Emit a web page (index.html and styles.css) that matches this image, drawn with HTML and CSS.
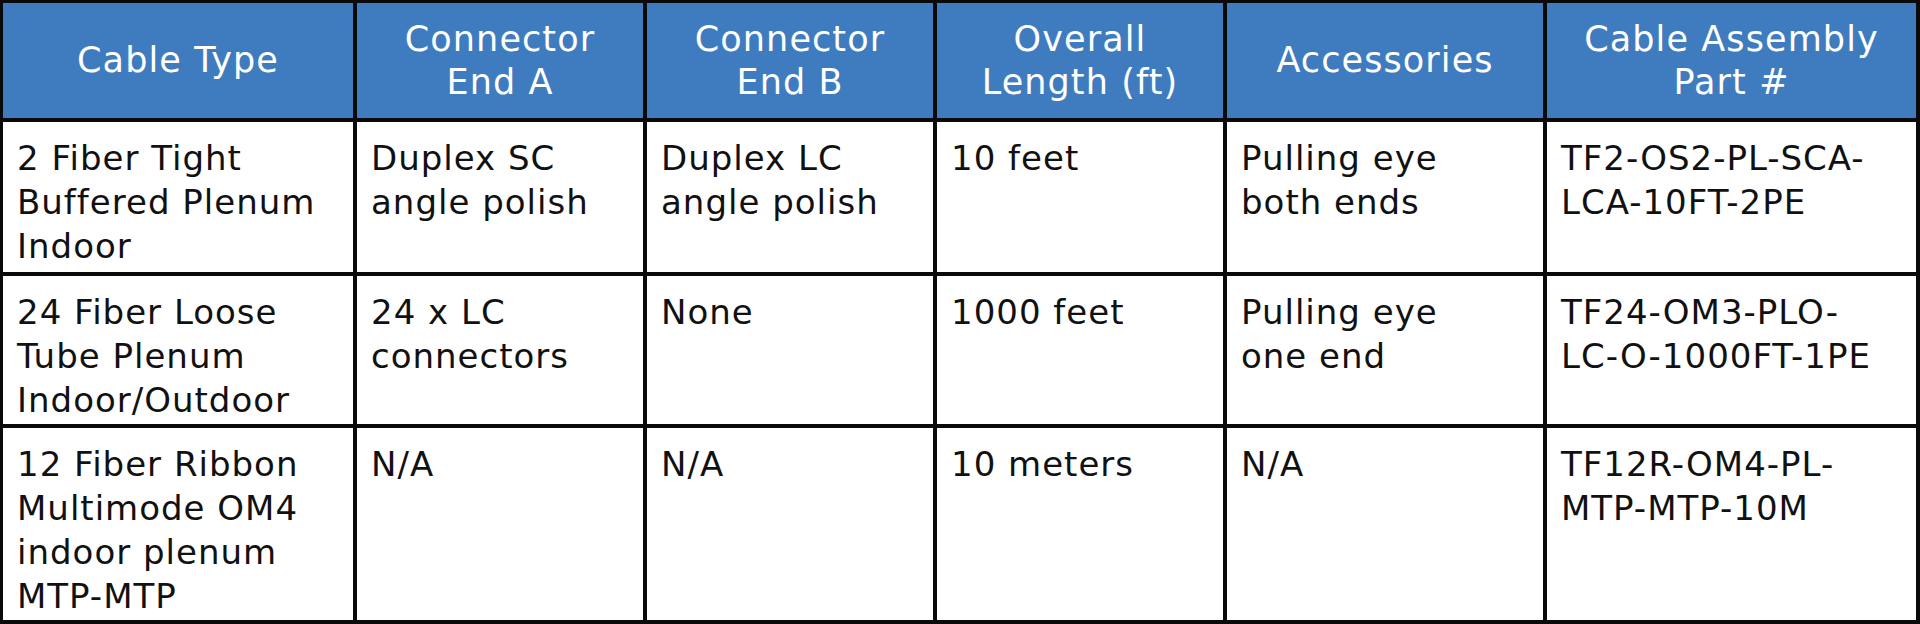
FILE: index.html
```
<!DOCTYPE html>
<html lang="en">
<head>
<meta charset="utf-8">
<title>Cable Assemblies</title>
<link rel="stylesheet" href="styles.css">
</head>
<body>
<table class="spec">
  <colgroup>
    <col class="c1"><col class="c2"><col class="c3"><col class="c4"><col class="c5"><col class="c6">
  </colgroup>
  <thead>
    <tr class="head">
      <th>Cable Type</th>
      <th>Connector<br>End A</th>
      <th>Connector<br>End B</th>
      <th>Overall<br>Length (ft)</th>
      <th>Accessories</th>
      <th>Cable Assembly<br>Part #</th>
    </tr>
  </thead>
  <tbody>
    <tr class="r1">
      <td>2 Fiber Tight<br>Buffered Plenum<br>Indoor</td>
      <td>Duplex SC<br>angle polish</td>
      <td>Duplex LC<br>angle polish</td>
      <td>10 feet</td>
      <td>Pulling eye<br>both ends</td>
      <td>TF2-OS2-PL-SCA-<br>LCA-10FT-2PE</td>
    </tr>
    <tr class="r2">
      <td>24 Fiber Loose<br>Tube Plenum<br>Indoor/Outdoor</td>
      <td>24 x LC<br>connectors</td>
      <td>None</td>
      <td>1000 feet</td>
      <td>Pulling eye<br>one end</td>
      <td>TF24-OM3-PLO-<br>LC-O-1000FT-1PE</td>
    </tr>
    <tr class="r3">
      <td>12 Fiber Ribbon<br>Multimode OM4<br>indoor plenum<br>MTP-MTP</td>
      <td>N/A</td>
      <td>N/A</td>
      <td>10 meters</td>
      <td>N/A</td>
      <td>TF12R-OM4-PL-<br>MTP-MTP-10M</td>
    </tr>
  </tbody>
</table>
</body>
</html>
```
FILE: styles.css
```
html, body {
  margin: 0;
  padding: 0;
  background: #ffffff;
}

.spec {
  width: 1920px;
  table-layout: fixed;
  border-collapse: separate;
  border-spacing: 0;
  border-top: 3px solid #0a0a0a;
  border-left: 3px solid #0a0a0a;
  font-family: "DejaVu Sans", "Liberation Sans", sans-serif;
  font-size: 34px;
  letter-spacing: 1px;
  line-height: 44px;
}

.c1 { width: 354px; }
.c2 { width: 290px; }
.c3 { width: 290px; }
.c4 { width: 290px; }
.c5 { width: 320px; }
.c6 { width: 373px; }

.spec th,
.spec td {
  box-sizing: border-box;
  border-right: 4px solid #0a0a0a;
  border-bottom: 4px solid #0a0a0a;
  white-space: nowrap;
  overflow: hidden;
}

.spec th {
  background: #3f7cbf;
  color: #ffffff;
  font-weight: normal;
  font-size: 35px;
  letter-spacing: 1.1px;
  line-height: 43px;
  text-align: center;
  vertical-align: middle;
  padding: 0 4px;
  height: 119px;
}

.spec td {
  color: #111111;
  text-align: left;
  vertical-align: top;
  padding: 14px 6px 0 14px;
}

.r1 td { height: 154px; }
.r2 td { height: 152px; }
.r3 td { height: 196px; }
```
